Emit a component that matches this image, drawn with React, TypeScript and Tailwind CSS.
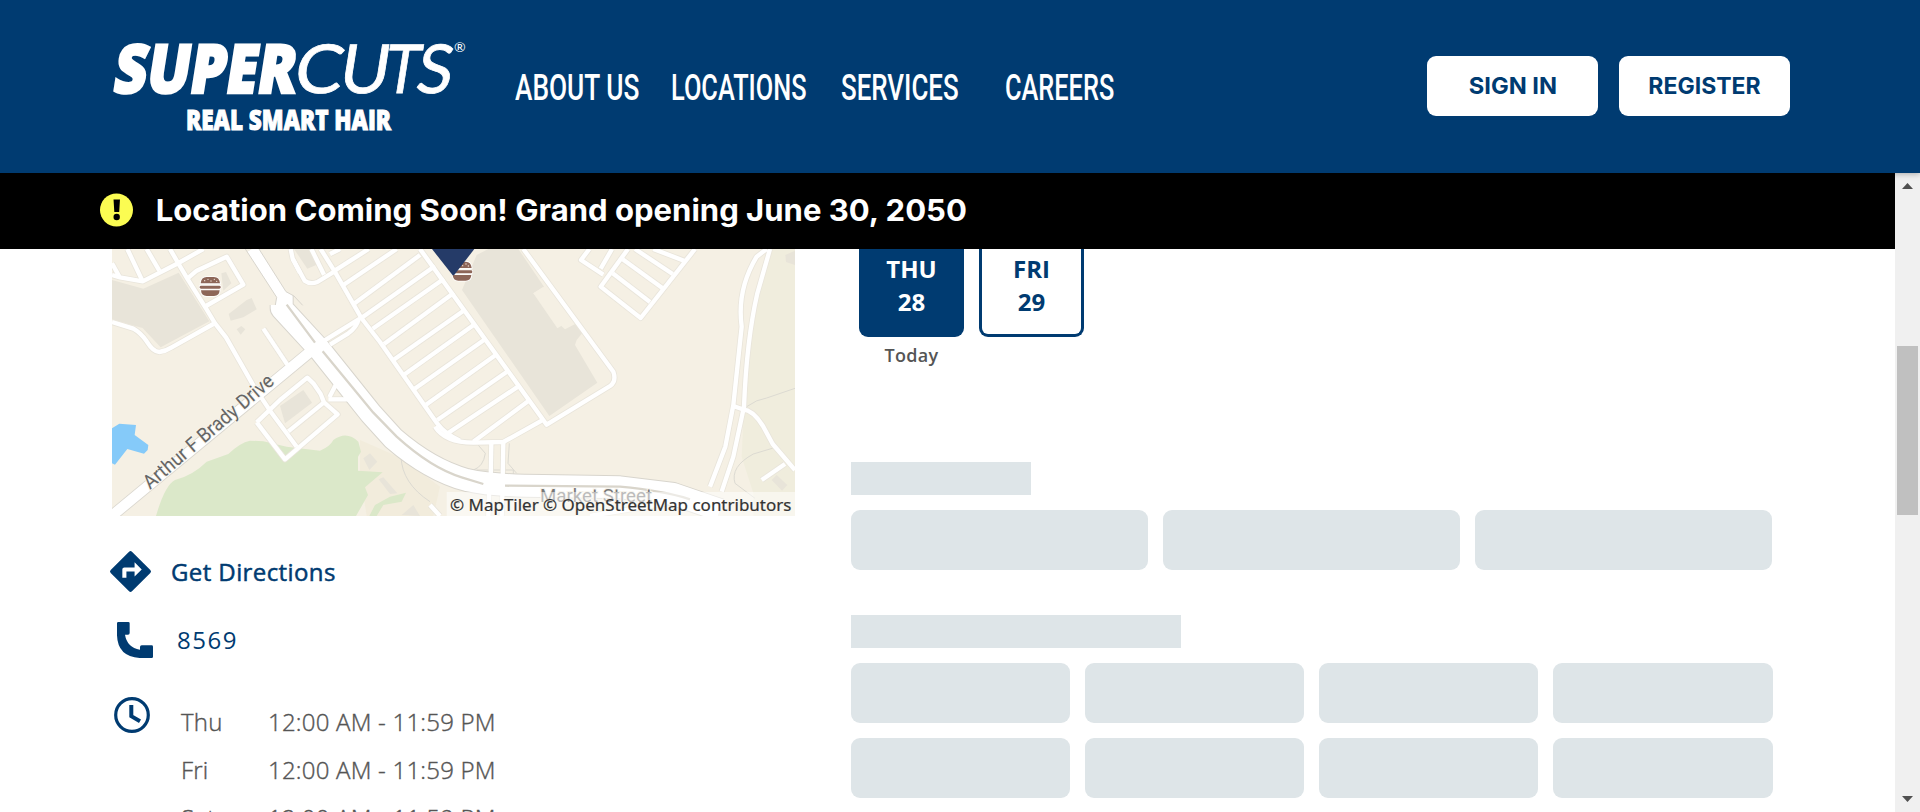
const ROAD = [
  // west side
  "M36 105L60 112L128 124L230 72L310 27", "M36 70L58 110", "M82 27L128 124", "M140 27L178 92", "M210 27L236 72L262 116L318 205L345 250L378 292L462 440L510 512L590 620",
  "M262 116L290 92L380 50L430 134L318 198", "M36 246L100 266Q122 278 140 304Q160 336 178 336Q196 334 215 322L340 252",
  "M490 266L562 374", "M470 547L555 658L713 523L672 487L662 462L640 430L622 413L540 480L470 547", "M672 487L565 574", "M685 478L748 478", "M688 472L710 430",
  "M572 27L578 56L614 122Q630 134 652 126L704 94", "M634 27L672 104", "M662 27L704 94L784 234L840 306L1010 548Q1035 582 1080 602",
  "M668 305L776 238Q770 262 745 280L690 314",
  "M690 42L720 27", "M704 92L806 27", "M730 135L890 27", "M764 190L960 45", "M784 234L1005 78", "M818 266L1032 116", "M852 312L1062 158",
  "M880 360L1094 210", "M912 404L1122 254", "M944 446L1152 300", "M978 494L1186 346", "M1012 540L1220 396", "M1040 582L1254 440", "M1120 605L1284 484",
  "M960 27L1340 554L1530 438Q1550 424 1540 395L1270 27",
  "M1005 560Q1035 608 1120 608L1210 606L1325 542", "M1174 610L1172 720", "M1210 606L1208 720",
  // north-east lots
  "M1468 27L1443 60L1510 104", "M1536 27L1502 86", "M1584 27L1502 140L1622 234L1785 27", "M1568 58L1690 146", "M1538 100L1650 186", "M1605 27L1718 102", "M1660 27L1752 62",
  // east road pair
  "M2000 27L1970 50Q1910 150 1925 260L1900 495L1876 620L1830 740", "M2010 27L1972 160Q1940 300 1932 500L1900 650L1865 755", "M1900 498L1928 508Q1960 510 1990 560L2018 612L2085 690", "M2055 672L1985 720",
  "M990 795L1020 828", "M1168 740L1165 828", "M1208 740L1205 828", "M1470 828L1700 790",
];
const TRUNK = ["M455 27L545 170L545 205L660 330L812 520L880 595Q990 690 1100 720Q1180 738 1330 738L1560 742L1720 762L1860 810"];
const MINOR = ["M1130 610L1156 640Q1150 680 1120 690", "M1228 610L1224 670L1250 700", "M903 650Q906 730 990 785", "M1940 500Q1970 478 2000 474L2085 445", "M2020 624L1960 642Q1890 680 1905 730L1965 775", "M1130 690L1240 690L1240 760M1130 690L1130 760"];

function Burger() {
  return (
    <g fill="#8d6658" stroke="#fff" strokeWidth="5" paintOrder="stroke">
      <path d="M302 130Q304 111 320 111L342 111Q358 111 360 130Z" />
      <rect x="299" y="137" width="63" height="9" rx="4" />
      <path d="M303 151L359 151Q358 168 342 168L320 168Q304 168 303 151Z" />
      <g fill="#f3e6dc" stroke="none">
        <circle cx="314" cy="122" r="2" /><circle cx="324" cy="118" r="2" /><circle cx="333" cy="123" r="2" /><circle cx="343" cy="118" r="2" /><circle cx="350" cy="124" r="2" />
      </g>
    </g>
  );
}

function StreetMap() {
  return (
    <svg className="block h-[267px] w-[683px]" viewBox="36 27 2049 801">
      <rect x="36" y="27" width="2049" height="801" fill="#f5f0e4" />
      <path d="M2010 27L2085 27L2085 828L1960 828L1960 760L1925 650L1932 500L1945 300L1980 160Z" fill="#f0eddd" />
      <path d="M780 600L905 655L1020 740L1000 828L800 828L780 700Z" fill="#f2ecdc" />
      <g fill="#e8e4d9">
        <path d="M36 120L130 146L236 98L328 244L182 322L128 264L105 258L36 238Z" />
        <path d="M386 222L440 180L455 174L470 208L430 232L392 242Z" /><path d="M410 268L424 258L436 268L422 284Z" /><path d="M364 100L378 96L394 130L370 152Z" />
        <path d="M540 498L610 450L636 488L555 550Z" /><path d="M582 27L635 27L650 74L622 86Z" />
        <path d="M1130 45L1165 27L1255 27L1332 140L1300 160L1370 245L1395 268L1430 250L1450 275L1430 300L1425 315L1492 428L1348 528L1086 150Z" />
        <path d="M790 655L810 640L832 665L808 690Z" /><path d="M836 718L850 712L892 760L870 762Z" /><path d="M905 825L940 795L960 828Z" /><path d="M2015 720L2030 705L2062 735L2046 752Z" /><path d="M2056 45L2085 32L2085 75L2058 66Z" />
      </g>
      <path d="M1300 160L1328 142L1405 245L1372 265Z" fill="#f5f0e4" />
      <path d="M168 828Q195 735 225 720Q280 705 320 665L385 642Q420 608 450 602L490 604L560 620L660 632Q690 620 700 600Q740 570 775 605L783 635L774 650L774 692L848 697L795 742L804 765L768 828Z" fill="#dbe8c9" />
      <path d="M808 828L825 795L870 770L918 758L905 785L850 795L830 828Z" fill="#dbe8c9" />
      <path d="M36 565L58 551L108 555L104 585L145 615L143 630L132 641L82 627L45 674L36 670Z" fill="#85caf9" />
      <g fill="none" stroke="#dcdad2" strokeWidth="3">{MINOR.map((d) => <path key={d} d={d} />)}</g>
      <g fill="none" strokeLinejoin="round">
        <g stroke="#e9e5db" strokeWidth="18">{ROAD.map((d) => <path key={d} d={d} />)}</g>
        <path d="M30 832L625 340" stroke="#dad7cf" strokeWidth="36" />
        {TRUNK.map((d) => <path key={d} d={d} stroke="#d8d5cd" strokeWidth="72" />)}
        <g stroke="#fff" strokeWidth="13">{ROAD.map((d) => <path key={d} d={d} />)}</g>
        <path d="M30 832L625 340L650 320" stroke="#fff" strokeWidth="31" />
        {TRUNK.map((d) => <path key={d} d={d} stroke="#fff" strokeWidth="66" />)}
        <path d="M560 194L645 308M668 334L820 518L890 590Q995 685 1085 712L1150 732M1215 737L1560 740Q1690 752 1770 778" stroke="#d9d5cb" strokeWidth="7" />
      </g>
      <path d="M400 27L436 27L530 172L526 195L505 195Z" fill="#f5f0e4" />
      <path d="M477 27L558 155L582 168L610 196L640 190L560 60L545 27Z" fill="#f5f0e4" />
      <path d="M436 27L530 172L526 195M477 27L558 155L582 168L608 196" fill="none" stroke="#d8d5cd" strokeWidth="3" />
      <path d="M578 56L600 98" stroke="#fff" strokeWidth="13" />
      <Burger />
      <g transform="translate(755 -46)"><Burger /></g>
      <path d="M996 27L1058 106L1062 106L1123 27Z" fill="#253b68" />
      <g fontFamily="Roboto, sans-serif" stroke="#f7f4eb" strokeWidth="6" paintOrder="stroke">
        <text transform="translate(150 750) rotate(-40.5)" fontSize="60" fill="#666" textLength="494" lengthAdjust="spacingAndGlyphs">Arthur F Brady Drive</text>
        <text x="1320" y="785" fontSize="56" fill="#777" textLength="336" lengthAdjust="spacingAndGlyphs">Market Street</text>
      </g>
      <rect x="1040" y="756" width="1045" height="72" fill="#fff" opacity=".5" />
      <text x="1050" y="813" fontSize="48" fill="#333" stroke="#333" strokeWidth=".6" fontFamily="Noto Sans, sans-serif" textLength="1024" lengthAdjust="spacingAndGlyphs">© MapTiler © OpenStreetMap contributors</text>
    </svg>
  );
}

function Logo() {
  return (
    <svg className="block h-[104px] w-[370px] shrink-0 overflow-visible" viewBox="0 0 370 104" fill="#fff" fontFamily="Lato, sans-serif">
      <g transform="translate(0 56.500) skewX(-9)">
        <g fontFamily="Open Sans, Lato, sans-serif" fontSize="67.500" fontWeight="800" stroke="#fff" strokeWidth="2.400">
          <text x="1.500" y="0" textLength="182" lengthAdjust="spacingAndGlyphs">SUPER</text>
        </g>
        <g fontSize="67.500" stroke="#fff" strokeWidth=".8">
          <text x="182" y="0" textLength="48" lengthAdjust="spacingAndGlyphs">C</text>
          <text x="227" y="0" textLength="50" lengthAdjust="spacingAndGlyphs">U</text>
          <text x="272" y="0" textLength="35" lengthAdjust="spacingAndGlyphs">T</text>
          <text x="304" y="0" textLength="36" lengthAdjust="spacingAndGlyphs">S</text>
        </g>
      </g>
      <text x="344" y="16" fontSize="14">®</text>
      <text x="76" y="94" fontSize="27.500" fontWeight="800" fontFamily="Open Sans, Lato, sans-serif" stroke="#fff" strokeWidth="1" textLength="205" lengthAdjust="spacingAndGlyphs">REAL SMART HAIR</text>
    </svg>
  );
}

const nav = [
  { label: "ABOUT US", box: "w-[156px]", scale: "scale-x-[0.71]" },
  { label: "LOCATIONS", box: "w-[170px]", scale: "scale-x-[0.685]" },
  { label: "SERVICES", box: "w-[164px]", scale: "scale-x-[0.7]" },
  { label: "CAREERS", box: "w-[110px]", scale: "scale-x-[0.685]" },
];

const hours = ["Thu", "Fri", "Sat"];

export default function App() {
  return (
    <div className="flex h-[812px] w-[1920px] flex-col overflow-hidden bg-white font-['Open_Sans',sans-serif]">
      <header className="z-10 flex h-[173px] shrink-0 items-start bg-[#003b71] shadow-[0_1px_6px_rgba(0,0,0,0.3)]">
        <div className="pt-[36px] pl-[110px]"><Logo /></div>
        <nav className="flex pt-[62px] pl-[35px] text-[37px] leading-[48px] font-medium text-white">
          {nav.map((n) => (
            <a key={n.label} className={n.box + " block whitespace-nowrap"}>
              <span className={n.scale + " inline-block origin-left font-['Roboto',sans-serif]"}>{n.label}</span>
            </a>
          ))}
        </nav>
        <div className="ml-auto flex gap-[21px] pt-[56px] pr-[130px]">
          <button className="h-[60px] w-[171px] rounded-[9px] bg-white font-['Inter',sans-serif] text-[23px] font-bold text-[#003b71]"><span className="inline-block scale-x-[1.03]">SIGN IN</span></button>
          <button className="h-[60px] w-[171px] rounded-[9px] bg-white font-['Inter',sans-serif] text-[23px] font-bold text-[#003b71]">REGISTER</button>
        </div>
      </header>
      <div className="flex min-h-0 flex-1">
        <main className="flex w-[1895px] flex-col overflow-hidden">
          <div className="flex h-[76px] shrink-0 items-center bg-black pb-[2px] pl-[99px] text-white">
            <svg className="size-[34px]" viewBox="0 0 34 34">
              <circle cx="17.500" cy="17" r="16.500" fill="#fbfc52" />
              <path d="M14.500 6.500h6.500l-.8 12.500h-4.900z" /><circle cx="17.700" cy="24" r="3.200" />
            </svg>
            <h2 className="origin-left scale-x-[1.035] pl-[22px] font-['Inter',sans-serif] text-[30px] font-bold whitespace-nowrap">Location Coming Soon! Grand opening June 30, 2050</h2>
          </div>
          <div className="flex">
            <section className="ml-[112px] w-[683px] shrink-0 text-[24px] text-[#003b71]">
              <StreetMap />
              <a className="mt-[31px] flex h-[49px] items-center">
                <svg className="-ml-[6px] size-[49px]" viewBox="0 0 24 24" fill="currentColor"><path d="m21.710 11.290-9-9a.996.996 0 0 0-1.410 0l-9 9a.996.996 0 0 0 0 1.410l9 9c.390.390 1.020.390 1.410 0l9-9a.996.996 0 0 0 0-1.410M14 14.500V12h-4v3H8v-4c0-.550.450-1 1-1h5V7.500l3.500 3.500z" /></svg>
                <span className="pl-[16px] font-medium tracking-[0.4px] [-webkit-text-stroke:0.5px_#003b71]">Get Directions</span>
              </a>
              <a className="mt-[26px] flex h-[36px] items-center">
                <svg className="ml-[5px] size-[36px]" viewBox="0 0 108 108" fill="currentColor"><path d="M4 0H34Q38 0 38 4V33Q38 38 33 38H24Q30 76 69 83V75Q69 70 74 70H104Q108 70 108 74V104Q108 108 104 108H68Q2 104 0 40V4Q0 0 4 0Z" /></svg>
                <span className="pl-[24px] tracking-[1.5px]">8569</span>
              </a>
              <div className="mt-[39px] flex">
                <svg className="ml-[2px] size-[36px]" viewBox="0 0 36 36" fill="none" stroke="currentColor"><circle cx="18" cy="18" r="16.300" strokeWidth="3.200" /><path d="M17.300 8V19.200L26 24.200" strokeWidth="4" /></svg>
                <ul className="pl-[31px] font-light text-[#555]">
                  {hours.map((d) => (
                    <li key={d} className="flex h-[48px] items-center pt-px">
                      <span className="w-[87px] tracking-[0.22px] [-webkit-text-stroke:0.4px_#555]">{d}</span>
                      <span className="whitespace-nowrap tracking-[0.22px] [-webkit-text-stroke:0.4px_#555]">12:00 AM - 11:59 PM</span>
                    </li>
                  ))}
                </ul>
              </div>
            </section>
            <section className="ml-[56px] w-[921.5px] shrink-0">
              <div className="flex h-[213px] gap-[15px] pl-[8px] text-center text-[24px] leading-[33px] font-bold">
                <div>
                  <div className="flex h-[88px] w-[105px] flex-col rounded-b-[9px] bg-[#003b71] pt-[3px] text-white"><span>THU</span><span>28</span></div>
                  <p className="pt-[4px] text-[18px] leading-[28px] font-semibold tracking-[0.3px] text-[#555]">Today</p>
                </div>
                <div className="flex h-[88px] w-[105px] flex-col rounded-b-[9px] border-[3px] border-t-0 border-[#003b71] pt-[3px] text-[#003b71]"><span>FRI</span><span>29</span></div>
              </div>
              <div className="h-[33px] w-[180px] bg-[#dee5e8]" />
              <div className="mt-[15px] flex gap-[15px]">
                {[0, 1, 2].map((i) => <div key={i} className="h-[60px] w-[297px] shrink-0 rounded-[9px] bg-[#dee5e8]" />)}
              </div>
              <div className="mt-[45px] h-[33px] w-[330px] bg-[#dee5e8]" />
              <div className="mt-[15px] grid grid-cols-4 gap-[15px]">
                {[0, 1, 2, 3, 4, 5, 6, 7].map((i) => <div key={i} className="h-[60px] rounded-[9px] bg-[#dee5e8]" />)}
              </div>
            </section>
          </div>
        </main>
        <aside className="flex w-[25px] flex-col items-center bg-[#f0f0f0] pt-[10px] pb-[10px]">
          <svg className="h-[6px] w-[11px] shrink-0" viewBox="0 0 11 6" fill="#505050"><path d="M0 6L5.500 0L11 6Z" /></svg>
          <div className="mt-[157px] h-[169px] w-[21px] bg-[#c0c0c0]" />
          <svg className="mt-auto h-[6px] w-[11px] shrink-0" viewBox="0 0 11 6" fill="#505050"><path d="M0 0L5.500 6L11 0Z" /></svg>
        </aside>
      </div>
    </div>
  );
}
